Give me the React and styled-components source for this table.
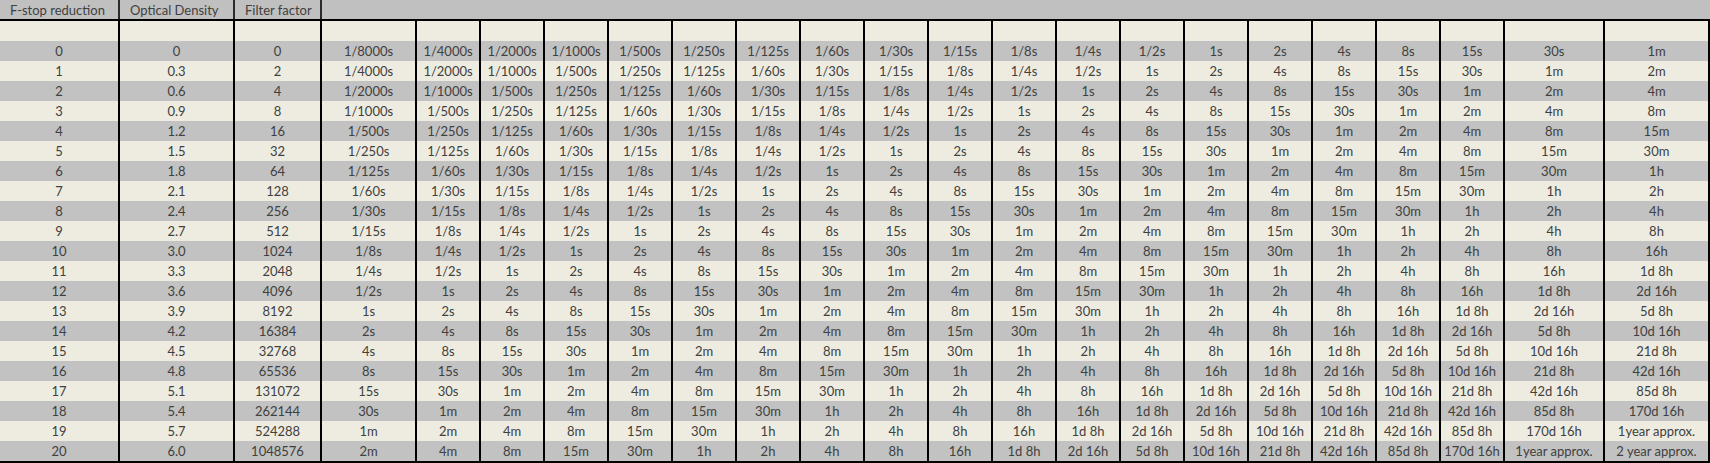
import React from 'react';
import styled, { createGlobalStyle } from 'styled-components';

const GlobalStyle = createGlobalStyle`
  body {
    margin: 0;
    background: #ffffff;
  }
`;

const COLUMNS = '120px 115px 87px 95px repeat(17, 64px) 100px 105px';

const TIMES = [
  '1/8000s', '1/4000s', '1/2000s', '1/1000s', '1/500s', '1/250s', '1/125s',
  '1/60s', '1/30s', '1/15s', '1/8s', '1/4s', '1/2s', '1s', '2s', '4s', '8s',
  '15s', '30s', '1m', '2m', '4m', '8m', '15m', '30m', '1h', '2h', '4h', '8h',
  '16h', '1d 8h', '2d 16h', '5d 8h', '10d 16h', '21d 8h', '42d 16h', '85d 8h',
  '170d 16h', '1year approx.', '2 year approx.',
];

const Table = styled.div`
  width: 1710px;
  font-family: Lato, 'Liberation Sans', sans-serif;
  font-size: 13px;
  color: #404040;
  border-bottom: 2px solid #000;
`;

const HeaderRow = styled.div`
  display: grid;
  grid-template-columns: 120px 115px 87px 1fr;
  height: 19px;
  background: #c0c0c0;
  border-bottom: 2px solid #000;
`;

const HeadCell = styled.div`
  display: flex;
  align-items: center;
  padding-left: 10px;
  white-space: nowrap;
  box-sizing: border-box;
  border-right: ${(p) => (p.$last ? 'none' : '2px solid #2a2a2a')};
`;

const Row = styled.div`
  display: grid;
  grid-template-columns: ${COLUMNS};
  height: 20px;
  background: ${(p) => (p.$shade ? '#c2c2c2' : '#eeece1')};
`;

const Cell = styled.div`
  display: flex;
  align-items: center;
  justify-content: center;
  white-space: nowrap;
  box-sizing: border-box;
  border-right: 2px solid #000;
`;

const density = (n) => (n === 0 ? '0' : (n * 0.3).toFixed(1));
const factor = (n) => (n === 0 ? 0 : 2 ** n);

export default function App() {
  const rows = Array.from({ length: 21 }, (_, n) => n);
  return (
    <>
      <GlobalStyle />
      <Table>
        <HeaderRow>
          <HeadCell>F-stop reduction</HeadCell>
          <HeadCell>Optical Density</HeadCell>
          <HeadCell>Filter factor</HeadCell>
          <HeadCell $last />
        </HeaderRow>
        <Row>
          {Array.from({ length: 23 }, (_, i) => (
            <Cell key={i} />
          ))}
        </Row>
        {rows.map((n) => (
          <Row key={n} $shade={n % 2 === 0}>
            <Cell>{n}</Cell>
            <Cell>{density(n)}</Cell>
            <Cell>{factor(n)}</Cell>
            {TIMES.slice(n, n + 20).map((t, j) => (
              <Cell key={j}>{t}</Cell>
            ))}
          </Row>
        ))}
      </Table>
    </>
  );
}
